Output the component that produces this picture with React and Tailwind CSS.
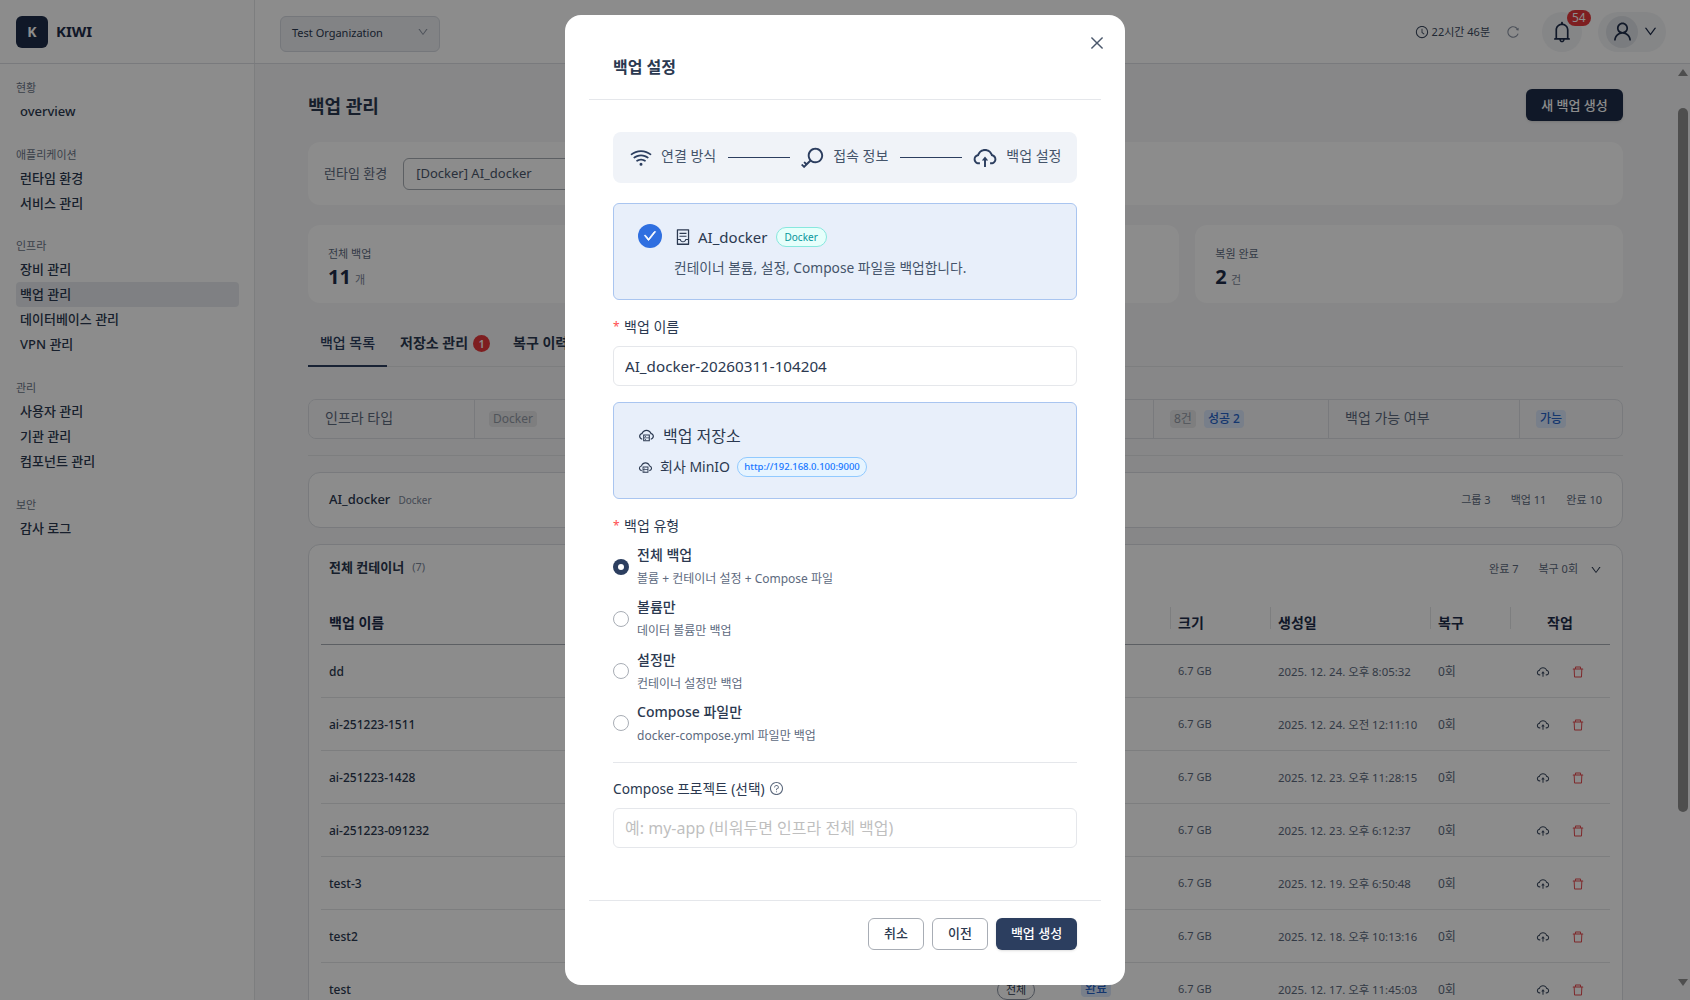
import {
  AiOutlineBell, AiOutlineCheck, AiOutlineClockCircle, AiOutlineClose, AiOutlineCloudServer, AiOutlineCloudUpload,
  AiOutlineContainer, AiOutlineDelete, AiOutlineDown, AiOutlineKey, AiOutlineQuestionCircle, AiOutlineReload,
  AiOutlineUser, AiOutlineWifi,
} from 'react-icons/ai';

const navGroups = [
  { title: '현황', items: ['overview'] },
  { title: '애플리케이션', items: ['런타임 환경', '서비스 관리'] },
  { title: '인프라', items: ['장비 관리', '백업 관리', '데이터베이스 관리', 'VPN 관리'] },
  { title: '관리', items: ['사용자 관리', '기관 관리', '컴포넌트 관리'] },
  { title: '보안', items: ['감사 로그'] },
];

const rows = [
  ['dd', '2025. 12. 24. 오후 8:05:32'],
  ['ai-251223-1511', '2025. 12. 24. 오전 12:11:10'],
  ['ai-251223-1428', '2025. 12. 23. 오후 11:28:15'],
  ['ai-251223-091232', '2025. 12. 23. 오후 6:12:37'],
  ['test-3', '2025. 12. 19. 오후 6:50:48'],
  ['test2', '2025. 12. 18. 오후 10:13:16'],
  ['test', '2025. 12. 17. 오후 11:45:03'],
];

const backupTypes = [
  { title: '전체 백업', desc: '볼륨 + 컨테이너 설정 + Compose 파일', checked: true },
  { title: '볼륨만', desc: '데이터 볼륨만 백업' },
  { title: '설정만', desc: '컨테이너 설정만 백업' },
  { title: 'Compose 파일만', desc: 'docker-compose.yml 파일만 백업' },
];

function Sidebar() {
  return (
    <aside className="w-[255px] shrink-0 border-r border-[#e3e5e8] bg-white pt-4 pl-4 pr-[15px]">
      {navGroups.map(g => (
        <div key={g.title} className="mb-[22.7px]">
          <div className="h-4 mb-[3px] text-[11px] leading-4 text-[#6b7688]">{g.title}</div>
          {g.items.map(item => (
            <div key={item} className={`h-[25px] px-1 rounded text-[13px] leading-[25px] font-medium text-[#2b3950] ${item === '백업 관리' ? 'bg-[#e8eaee]' : ''}`}>{item}</div>
          ))}
        </div>
      ))}
    </aside>
  );
}

function Topbar() {
  return (
    <header className="h-16 shrink-0 flex border-b border-[#dcdfe4] bg-white">
      <div className="w-[255px] shrink-0 border-r border-[#e3e5e8] flex items-center pl-4">
        <div className="w-8 h-8 rounded-md bg-[#1e2d4a] flex items-center justify-center text-white text-sm font-bold">K</div>
        <span className="ml-2 text-[15px] font-bold text-[#1e2d4a]">KIWI</span>
      </div>
      <div className="flex-1 flex items-center pl-[25px] pr-6">
        <div className="w-40 h-9 mt-1 border border-[#d5d9e0] rounded-md bg-[#edeff3] flex items-center justify-between pl-[11px] pr-[10px] text-[11px] text-[#2b3950]">
          Test Organization
          <AiOutlineDown size={12} className="text-[#8c94a3] -mt-1" />
        </div>
        <div className="ml-auto flex items-center">
          <AiOutlineClockCircle size={14} className="text-[#3c4a60]" />
          <span className="ml-[3px] mt-[2px] text-[11px] text-[#3c4a60]">22시간 46분</span>
          <AiOutlineReload size={14} className="ml-4 text-[#8a93a3]" />
          <div className="relative ml-[22px] w-10 h-10 rounded-full bg-[#f3f4f6] flex items-center justify-center text-[#1e2d4a]">
            <AiOutlineBell size={24} />
            <span className="absolute -top-[2px] left-[25px] h-4 px-[5px] rounded-full bg-[#e5383b] text-white text-xs leading-4">54</span>
          </div>
          <div className="ml-4 w-[68px] h-10 rounded-full bg-[#f3f4f6] flex items-center pl-2 text-[#1e2d4a]">
            <div className="w-8 h-8 rounded-full bg-[#dfe2e7] flex items-center justify-center"><AiOutlineUser size={23} /></div>
            <AiOutlineDown size={15} className="ml-[5px]" />
          </div>
        </div>
      </div>
    </header>
  );
}

function Stat({ label, value, unit }) {
  return (
    <div className="h-[78px] rounded-xl bg-white px-5 pt-[21px]">
      {label && (
        <>
          <div className="text-[11px] leading-4 text-[#5d6a7e]">{label}</div>
          <div className="mt-[1px] text-[#1e2d4a]"><span className="text-xl font-bold">{value}</span> <span className="text-[11px] text-[#7b8597]">{unit}</span></div>
        </>
      )}
    </div>
  );
}

function BackupTable() {
  return (
    <table className="w-[1289px] table-fixed mt-3">
      <colgroup>
        <col className="w-[664px]" />
        <col className="w-[88px]" />
        <col className="w-[97px]" />
        <col className="w-[100px]" />
        <col className="w-[160px]" />
        <col className="w-[80px]" />
        <col className="w-[100px]" />
      </colgroup>
      <thead>
        <tr className="h-[42px] border-b border-[#a8adb5] text-left text-sm font-semibold text-[#1e2d4a]">
          <th className="px-2 font-semibold">백업 이름</th>
          <th className="px-3 font-semibold">유형</th>
          <th className="px-2 font-semibold">상태</th>
          {['크기', '생성일', '복구'].map(h => (
            <th key={h} className="px-2 font-semibold relative">
              <span className="absolute left-0 top-[5px] h-[22px] w-px bg-[#e3e5e8]" />{h}
            </th>
          ))}
          <th className="px-2 font-semibold text-center relative">
            <span className="absolute left-0 top-[5px] h-[22px] w-px bg-[#e3e5e8]" />작업
          </th>
        </tr>
      </thead>
      <tbody>
        {rows.map(([name, date]) => (
          <tr key={name} className="h-[53px] border-b border-[#e3e5e8] text-[11px] text-[#5d6a7e] [&>td]:pt-[2px]">
            <td className="px-2 text-xs font-medium text-[#2b3950]">{name}</td>
            <td className="px-3"><span className="inline-block w-[38px] h-[20px] border border-[#8c94a3] rounded-full text-center text-[11px] leading-[18px] text-[#2b3950]">전체</span></td>
            <td className="px-2"><span className="inline-block px-1 rounded bg-[#dbe7fb] text-[#2563c9] text-xs font-medium">완료</span></td>
            <td className="px-2">6.7 GB</td>
            <td className="px-2 text-[11.4px] whitespace-nowrap">{date}</td>
            <td className="px-2 text-xs">0회</td>
            <td className="pl-[26px]">
              <div className="flex items-center gap-[21px]">
                <AiOutlineCloudUpload size={14} className="text-[#3c4a60]" />
                <AiOutlineDelete size={14} className="text-[#e5484d]" />
              </div>
            </td>
          </tr>
        ))}
      </tbody>
    </table>
  );
}

function Page() {
  return (
    <main className="flex-1 min-w-0 overflow-hidden bg-[#f6f6f7] px-[53px] pt-[25px]">
      <div className="flex items-center justify-between">
        <h1 className="pt-[2px] text-lg font-bold text-[#2b3950]">백업 관리</h1>
        <button className="w-[97px] h-8 pt-[2px] rounded-md bg-[#1e2d4a] text-white text-[13px] font-medium shadow">새 백업 생성</button>
      </div>

      <div className="mt-[21px] h-[63px] rounded-xl bg-white flex items-center px-4 gap-4">
        <span className="text-[13px] text-[#5d6a7e]">런타임 환경</span>
        <div className="w-[320px] h-8 border border-[#a8adb5] rounded-md flex items-center px-3 text-[13px] text-[#4b586c]">[Docker] AI_docker</div>
      </div>

      <div className="mt-5 grid grid-cols-3 gap-4">
        <Stat label="전체 백업" value="11" unit="개" />
        <Stat />
        <Stat label="복원 완료" value="2" unit="건" />
      </div>

      <div className="mt-4 h-12 flex border-b border-[#e3e5e8] text-sm">
        <div className="w-[79px] h-12 border-b-2 border-[#2c3e5f] text-center leading-[48px] font-medium text-[#2c3e5f] whitespace-nowrap">백업 목록</div>
        <div className="ml-[13px] flex items-center h-[48px] font-semibold text-[#2b3950]">
          저장소 관리
          <span className="ml-[5px] w-[17px] h-[17px] rounded-full bg-[#e5383b] text-white text-[11px] leading-[17px] text-center">1</span>
        </div>
        <div className="ml-[23px] flex items-center h-[48px] font-semibold text-[#2b3950]">복구 이력</div>
      </div>

      <div className="mt-8 h-10 border border-[#dcdfe4] rounded-lg flex items-stretch overflow-hidden text-sm">
        <div className="w-[165px] bg-[#f6f6f7] flex items-center pl-4 pb-[2px] text-[#5d6a7e]">인프라 타입</div>
        <div className="w-[679px] border-l border-[#dcdfe4] flex items-center pl-[14px]"><span className="px-1 rounded bg-[#e5e5e7] text-xs text-[#9299a5]">Docker</span></div>
        <div className="flex-none w-[175px] border-l border-[#dcdfe4] flex items-center pl-4 gap-2 text-xs">
          <span className="px-1 py-px rounded bg-[#e5e5e7] text-[#9299a5]">8건</span>
          <span className="px-1 py-px rounded bg-[#dbe7fb] text-[#2563c9] font-medium">성공 2</span>
        </div>
        <div className="w-[191px] border-l border-[#dcdfe4] bg-[#f6f6f7] flex items-center pl-4 pb-[2px] text-[#5d6a7e]">백업 가능 여부</div>
        <div className="flex-1 border-l border-[#dcdfe4] flex items-center pl-4 text-xs"><span className="px-1 py-px rounded bg-[#dbe7fb] text-[#2563c9] font-medium">가능</span></div>
      </div>

      <div className="mt-4 h-px bg-[#e3e5e8]" />

      <div className="mt-4 h-14 border border-[#dcdfe4] rounded-xl bg-white flex items-center px-5">
        <span className="text-[13px] font-medium text-[#2b3950]">AI_docker</span>
        <span className="ml-2 text-[10px] text-[#7b8597]">Docker</span>
        <div className="ml-auto flex gap-5 text-[11px] text-[#5d6a7e]">
          <span>그룹 3</span><span>백업 11</span><span>완료 10</span>
        </div>
      </div>

      <div className="mt-4 border border-[#dcdfe4] rounded-xl bg-white px-3">
        <div className="h-[45px] flex items-center pl-2 pr-2">
          <span className="text-[13px] font-semibold text-[#2b3950]">전체 컨테이너</span>
          <span className="ml-2 text-[11px] text-[#7b8597]">(7)</span>
          <div className="ml-auto flex items-center pt-1 text-[11px] text-[#5d6a7e]">
            <span>완료 7</span>
            <span className="ml-5">복구 0회</span>
            <AiOutlineDown size={12} className="ml-3 text-[#2b3950]" />
          </div>
        </div>
        <BackupTable />
      </div>
    </main>
  );
}

function Scrollbar() {
  return (
    <div className="w-[14px] shrink-0 bg-[#f6f6f7] flex flex-col items-center pt-[5px]">
      <span className="w-0 h-0 border-x-[5px] border-x-transparent border-b-[7px] border-b-[#8f8f8f]" />
      <span className="mt-[32px] w-[10px] h-[704px] rounded-full bg-[#8f8f8f]" />
      <span className="mt-[167px] w-0 h-0 border-x-[5px] border-x-transparent border-t-[7px] border-t-[#8f8f8f]" />
    </div>
  );
}

function Field({ label, required, children, className }) {
  return (
    <div className={`h-[22px] flex items-center text-sm text-[#2b3950] ${className}`}>
      {required && <span className="w-[11px] text-[#ff4d4f] text-xs">*</span>}
      {label}
      {children}
    </div>
  );
}

function Step({ icon, label }) {
  return (
    <div className="flex items-center shrink-0">
      {icon}
      <span className="ml-2 -mt-[3px] text-sm text-[#44546a]">{label}</span>
    </div>
  );
}

function BackupModal() {
  return (
    <div className="absolute left-[565px] top-[15px] w-[560px] h-[970px] rounded-2xl bg-white flex flex-col">
      <button className="absolute right-[19px] top-[19px] text-[#4b586c]"><AiOutlineClose size={18} /></button>
      <div className="h-[85px] shrink-0 mx-6 px-6 pt-[19px] border-b border-[#e5e7eb] flex items-center text-base font-semibold text-[#2b3950]">백업 설정</div>

      <div className="flex-1 px-12 pt-8">
        <div className="h-[51px] rounded-lg bg-[#f0f3f8] flex items-center pl-4 text-[#2c3e5f]">
          <Step icon={<AiOutlineWifi size={24} />} label="연결 방식" />
          <span className="ml-3 w-[62px] h-px bg-[#2c3e5f]" />
          <span className="w-[11px]" />
          <Step icon={<AiOutlineKey size={26} className="-mx-px" />} label="접속 정보" />
          <span className="ml-3 w-[62px] h-px bg-[#2c3e5f]" />
          <span className="w-[10px]" />
          <Step icon={<AiOutlineCloudUpload size={26} />} label="백업 설정" />
        </div>

        <div className="mt-5 h-[97px] border border-[#a9c5f0] rounded-md bg-[#e8effa] pl-6 pr-4 pt-5 flex">
          <div className="w-6 h-6 rounded-full bg-[#2f6fe0] flex items-center justify-center text-white"><AiOutlineCheck size={14} stroke="currentColor" strokeWidth={60} /></div>
          <div className="ml-3">
            <div className="flex items-center h-[32px] -mt-[3px] text-[#2b3950]">
              <AiOutlineContainer size={18} />
              <span className="ml-[6px] text-[15px]">AI_docker</span>
              <span className="ml-2 h-5 px-2 rounded-full border border-[#87e8de] bg-[#e6fffb] text-[10px] leading-[18px] text-[#08979c]">Docker</span>
            </div>
            <div className="mt-[5px] text-[13.75px] text-[#44546a]">컨테이너 볼륨, 설정, Compose 파일을 백업합니다.</div>
          </div>
        </div>

        <Field label="백업 이름" required className="mt-4" />
        <input readOnly value="AI_docker-20260311-104204" className="mt-2 w-full h-10 border border-[#e5e7eb] rounded-md px-[11px] text-[15.2px] text-[#2b3950] outline-none" />

        <div className="mt-4 h-[97px] border border-[#a9c5f0] rounded-md bg-[#e8effa] px-6 pt-5 text-[#2b3950]">
          <div className="flex items-center h-6">
            <AiOutlineCloudServer size={17} />
            <span className="ml-2 pt-[2px] text-base">백업 저장소</span>
          </div>
          <div className="flex items-center mt-[10px] h-5">
            <AiOutlineCloudServer size={15} />
            <span className="ml-[7px] text-sm">회사 MinIO</span>
            <span className="ml-[7px] h-5 w-[130px] rounded-full border border-[#91caff] bg-[#e6f4ff] text-center text-[9.5px] font-medium leading-[18px] text-[#1677ff]">http://192.168.0.100:9000</span>
          </div>
        </div>

        <Field label="백업 유형" required className="mt-4" />
        <div className="mt-2 flex flex-col gap-[9.3px]">
          {backupTypes.map(t => (
            <div key={t.title} className="flex items-center h-[43px]">
              <span className={`w-4 h-4 rounded-full flex items-center justify-center ${t.checked ? 'bg-[#2c3e5f]' : 'border border-[#a8adb5]'}`}>
                {t.checked && <span className="w-[6px] h-[6px] rounded-full bg-white" />}
              </span>
              <div className="ml-2">
                <div className="h-5 text-sm leading-5 font-medium text-[#2b3950]">{t.title}</div>
                <div className="mt-[5px] h-[18px] text-xs leading-[18px] text-[#5d6a7e]">{t.desc}</div>
              </div>
            </div>
          ))}
        </div>

        <div className="mt-[17px] h-px bg-[#e5e7eb]" />

        <Field label="Compose 프로젝트 (선택)" className="mt-[15px] text-[13.7px]">
          <AiOutlineQuestionCircle size={15} className="ml-1 text-[#5d6a7e]" />
        </Field>
        <input readOnly placeholder="예: my-app (비워두면 인프라 전체 백업)" className="mt-2 w-full h-10 border border-[#e5e7eb] rounded-md px-[11px] text-base outline-none placeholder:text-[#bfbfbf]" />
      </div>

      <div className="h-[85px] shrink-0 mx-6 pt-[17px] px-6 border-t border-[#e5e7eb] flex justify-end gap-2 text-[13px] font-medium">
        <button className="w-14 h-8 border border-[#a8adb5] rounded-md text-[#2b3950]">취소</button>
        <button className="w-14 h-8 border border-[#a8adb5] rounded-md text-[#2b3950]">이전</button>
        <button className="w-[81px] h-8 rounded-md bg-[#2c3e5f] text-white shadow-sm">백업 생성</button>
      </div>
    </div>
  );
}

export default function App() {
  return (
    <div className="relative h-screen overflow-hidden flex flex-col font-['Noto_Sans','Noto_Sans_CJK_KR',sans-serif]">
      <Topbar />
      <div className="flex-1 min-h-0 flex">
        <Sidebar />
        <Page />
        <Scrollbar />
      </div>
      <div className="absolute inset-0 bg-black/45" />
      <BackupModal />
    </div>
  );
}
